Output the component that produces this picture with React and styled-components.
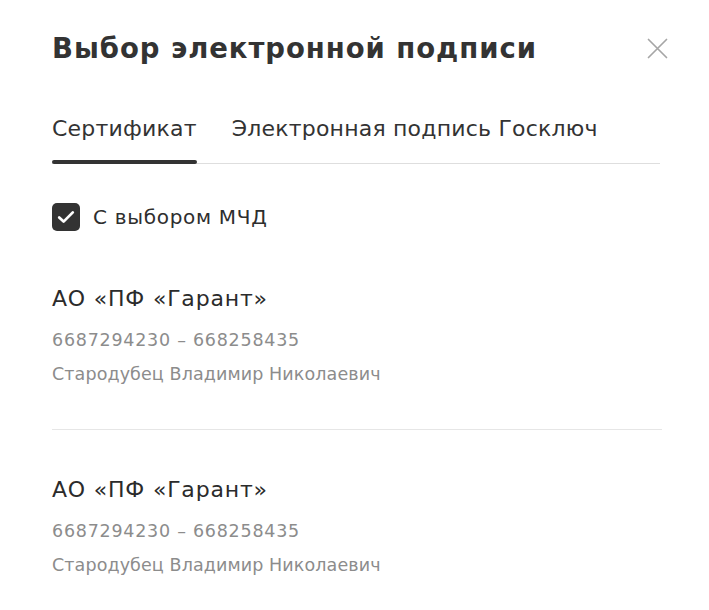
import styled, { createGlobalStyle } from "styled-components";

const GlobalStyle = createGlobalStyle`
  html, body {
    margin: 0;
    padding: 0;
    background: #ffffff;
  }
  body {
    font-family: "DejaVu Sans", "Noto Sans", sans-serif;
    color: #2b2b2b;
  }
`;

const certificates = [
  {
    id: 1,
    name: "АО «ПФ «Гарант»",
    inn: "6687294230 – 668258435",
    owner: "Стародубец Владимир Николаевич",
  },
  {
    id: 2,
    name: "АО «ПФ «Гарант»",
    inn: "6687294230 – 668258435",
    owner: "Стародубец Владимир Николаевич",
  },
];

function App() {
  return (
    <>
      <GlobalStyle />
      <Modal>
        <Header>
          <Title>Выбор электронной подписи</Title>
          <CloseButton aria-label="Закрыть">
            <svg width="21" height="21" viewBox="0 0 21 21">
              <path
                d="M1.5 1.5 L19.5 19.5 M19.5 1.5 L1.5 19.5"
                stroke="#a6a6a6"
                strokeWidth="1.7"
                strokeLinecap="round"
              />
            </svg>
          </CloseButton>
        </Header>
        <Tabs>
          <Tab $active>Сертификат</Tab>
          <Tab>Электронная подпись Госключ</Tab>
        </Tabs>
        <CheckRow>
          <CheckBox>
            <svg width="18" height="14" viewBox="0 0 18 14">
              <path
                d="M2.2 7.4 L6.6 11.6 L15.8 2.4"
                fill="none"
                stroke="#ffffff"
                strokeWidth="2.7"
                strokeLinecap="round"
                strokeLinejoin="round"
              />
            </svg>
          </CheckBox>
          <CheckLabel>С выбором МЧД</CheckLabel>
        </CheckRow>
        <List>
          {certificates.map((cert) => (
            <Item key={cert.id}>
              <ItemName>{cert.name}</ItemName>
              <ItemMeta $tracking="0.75px">{cert.inn}</ItemMeta>
              <ItemMeta $tracking="0.1px">{cert.owner}</ItemMeta>
            </Item>
          ))}
        </List>
      </Modal>
    </>
  );
}

export default App;

const Modal = styled.div`
  width: 709px;
  min-height: 610px;
  box-sizing: border-box;
  padding: 30px 47px 0 52px;
  background: #ffffff;
`;

const Header = styled.div`
  display: flex;
  align-items: center;
  justify-content: space-between;
`;

const Title = styled.h1`
  margin: 0;
  font-size: 27.5px;
  font-weight: 700;
  line-height: 36px;
  letter-spacing: 0.95px;
  color: #333333;
`;

const CloseButton = styled.button`
  display: flex;
  align-items: center;
  justify-content: center;
  padding: 0;
  margin-right: -6px;
  border: none;
  background: none;
  cursor: pointer;
`;

const Tabs = styled.div`
  display: flex;
  gap: 35px;
  margin: 49px 2px 0 0;
  border-bottom: 1px solid #dedede;
`;

const Tab = styled.div`
  position: relative;
  padding-bottom: 20px;
  font-size: 22px;
  line-height: 28px;
  letter-spacing: 0.2px;
  color: #333333;
  cursor: pointer;

  &::after {
    content: "";
    display: ${(p) => (p.$active ? "block" : "none")};
    position: absolute;
    left: 0;
    right: 0;
    bottom: -1px;
    height: 4px;
    border-radius: 2px;
    background: #333333;
  }
`;

const CheckRow = styled.label`
  display: flex;
  align-items: center;
  gap: 13px;
  margin-top: 39px;
`;

const CheckBox = styled.span`
  display: flex;
  align-items: center;
  justify-content: center;
  width: 28px;
  height: 28px;
  border-radius: 5px;
  background: #333333;
`;

const CheckLabel = styled.span`
  font-size: 20px;
  line-height: 28px;
  letter-spacing: 0.7px;
  color: #2e2e2e;
`;

const List = styled.div`
  display: flex;
  flex-direction: column;
  margin-top: 54px;
`;

const Item = styled.div`
  display: flex;
  flex-direction: column;
  gap: 10px;
  padding-bottom: 43px;

  & + & {
    padding-top: 46px;
    border-top: 1px solid #e6e6e6;
  }
`;

const ItemName = styled.div`
  font-size: 22px;
  line-height: 28px;
  letter-spacing: 0.8px;
  color: #2b2b2b;
  margin-bottom: 5px;
`;

const ItemMeta = styled.div`
  font-size: 17.5px;
  line-height: 24px;
  letter-spacing: ${(p) => p.$tracking || "0"};
  color: #8c8c8c;
`;
